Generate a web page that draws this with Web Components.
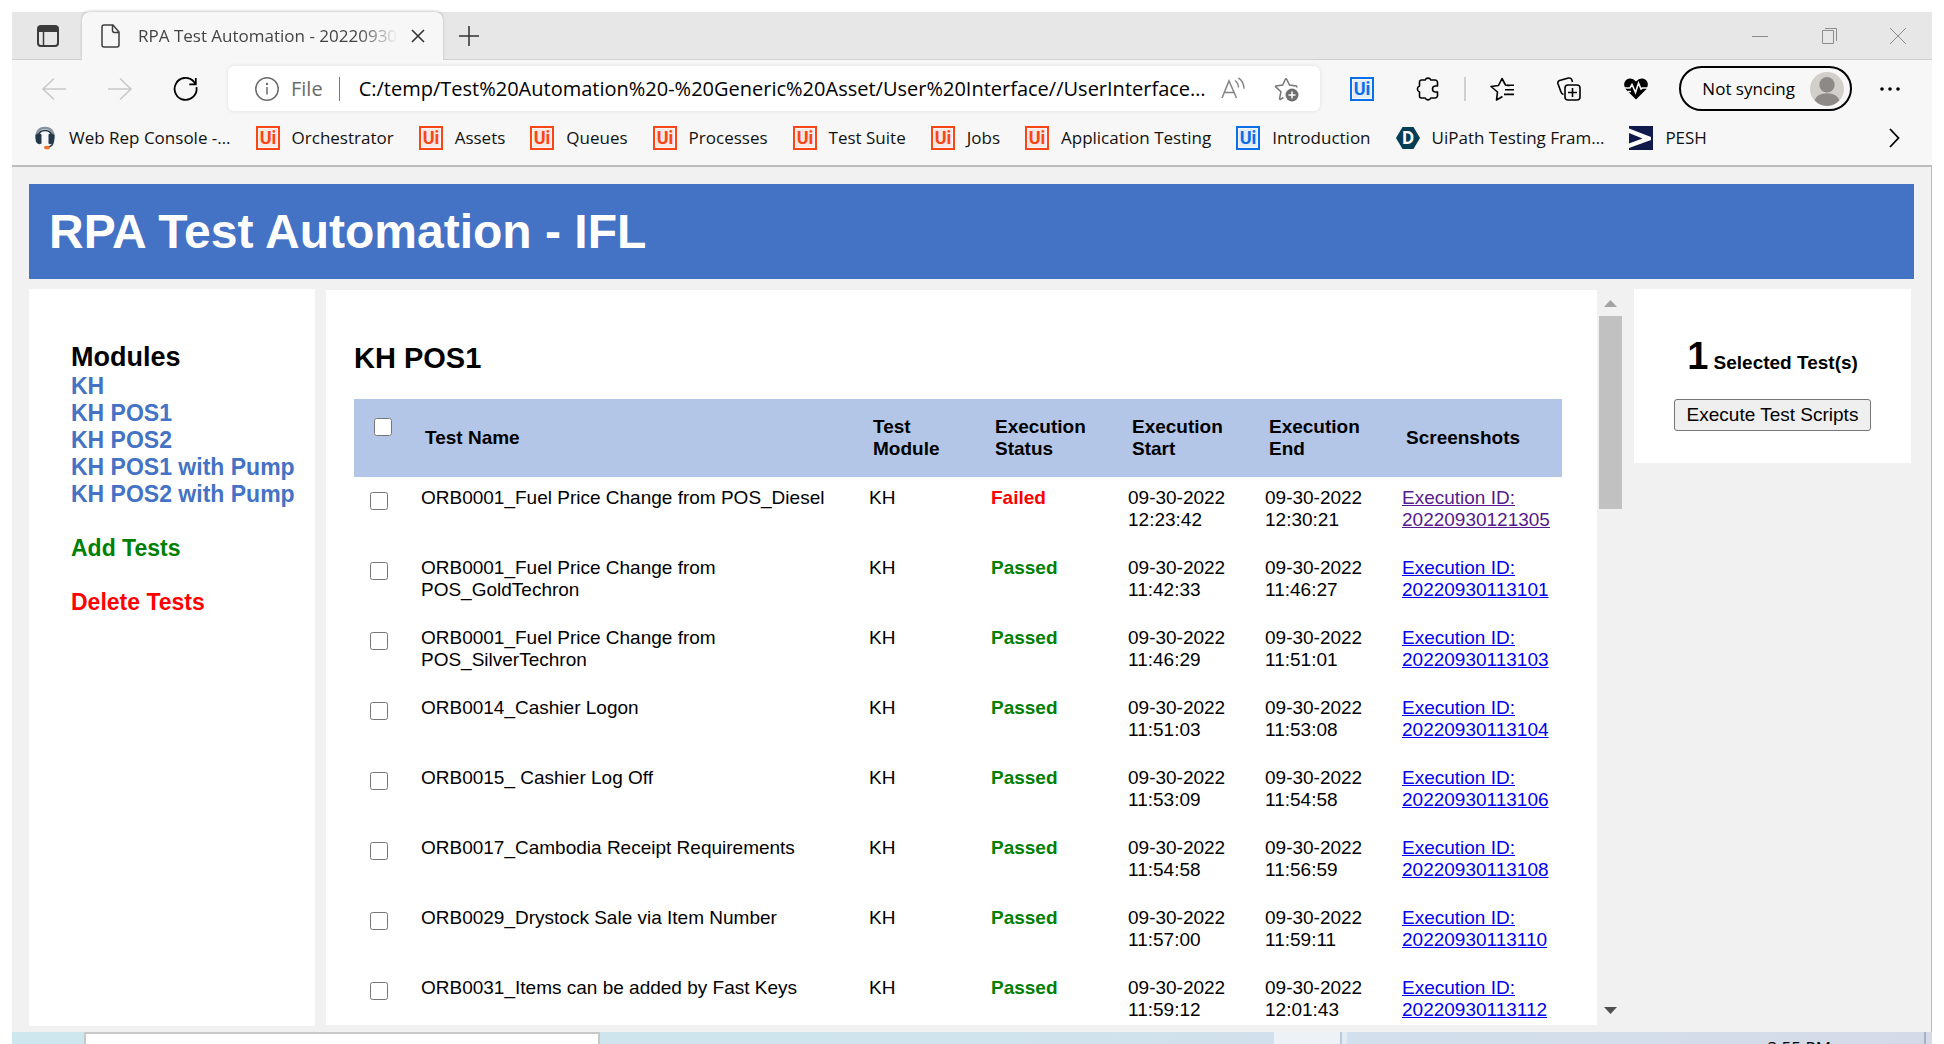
<!DOCTYPE html>
<html lang="en">
<head>
<meta charset="utf-8">
<title>RPA Test Automation</title>
<style>
html, body { margin: 0; height: 100%; background: #fff; overflow: hidden; }
body { font-family: "Liberation Sans", Arial, sans-serif; color: #000; }
</style>
</head>
<body>
<desktop-view></desktop-view>
<script>
const define = (name, html, setup) => {
  const tpl = document.createElement('template');
  tpl.innerHTML = html;
  customElements.define(name, class extends HTMLElement {
    constructor() {
      super();
      this.attachShadow({ mode: 'open' }).append(tpl.content.cloneNode(true));
    }
    connectedCallback() { if (setup) setup(this, this.shadowRoot); }
  });
};

/* ---------- icons ---------- */
const ui = c => `<rect width="24" height="24" fill="${c}"/><rect x="2" y="2" width="20" height="20" fill="#f7f7f7"/><rect x="3" y="3" width="18" height="18" fill="${c}" opacity=".08"/><text x="12" y="18" text-anchor="middle" font-family="Roboto, sans-serif" font-weight="700" font-size="18" fill="${c}">Ui</text>`;
const ICONS = {
  tabs: '<g fill="none" stroke="#3b3b3b" stroke-width="2"><rect x="2" y="2" width="20" height="20" rx="3"/><path d="M7.500 7v15" stroke-width="1.500"/></g><path d="M2 2h20v6H2z" fill="#3b3b3b"/>',
  page: '<path d="M5 1h9l6 7v13a2 2 0 0 1-2 2H5a2 2 0 0 1-2-2V3a2 2 0 0 1 2-2zM13.500 1v5.500a2 2 0 0 0 2 2H20" fill="none" stroke="#3f3f3f" stroke-width="1.500"/>',
  close: '<path d="M6 6l12 12M18 6L6 18" fill="none" stroke="#333" stroke-width="1.600"/>',
  plus: '<path d="M12 2v20M2 12h20" fill="none" stroke="#333" stroke-width="1.500"/>',
  back: '<path d="M24 12H1M12 1.500L1 12l11 10.500" fill="none" stroke="#c9c9c9" stroke-width="1.600"/>',
  forward: '<path d="M0 12h23M12 1.500L23 12 12 22.500" fill="none" stroke="#c9c9c9" stroke-width="1.600"/>',
  refresh: '<path d="M22.500 10.200A11 11 0 1 1 19.500 4.200M21.800 1v6.300h-6.500M19 3.800l2.800 3.300" fill="none" stroke="#000" stroke-width="1.800"/>',
  info: '<g fill="none" stroke="#6b6b6b" stroke-width="1.500"><circle cx="12" cy="12" r="11.200"/><path d="M12 10v7.500"/></g><circle cx="12" cy="7" r="1.200" fill="#6b6b6b"/>',
  read: '<g fill="none" stroke="#848484" stroke-width="1.500"><path d="M1 21L8 4l7.500 17M3.500 15.500h9.500M14 3.500q3.500 2.500 3.500 7M17.500 .8q5.500 4 5.500 11"/></g>',
  star: '<path d="M9.500 20.500l-3 1.800a.6.6 0 0 1-.9-.7l1.300-6.900-5.200-4.800a.6.6 0 0 1 .3-1l6.700-.8L11.500 2a.6.6 0 0 1 1.100 0l2.900 6.100 6.700.9q1 .5.300 1.500" fill="none" stroke="#777" stroke-width="1.500"/><circle cx="18" cy="18" r="6.500" fill="#6f6f6f"/><path d="M18 14.500v7M14.500 18h7" stroke="#fff" stroke-width="1.500"/>',
  puzzle: '<path d="M5.500 3h3.700a3 3 0 0 1 5.600 0H19a2.500 2.500 0 0 1 2.500 2.500V9h-2a3 3 0 0 0 0 6h2v3.500A2.500 2.500 0 0 1 19 21h-4.200a3 3 0 0 1-5.600 0H5.500a2 2 0 0 1-2-2v-4a3.200 3.200 0 0 1 0-6V5a2 2 0 0 1 2-2z" fill="none" stroke="#000" stroke-width="1.600" stroke-linejoin="round"/>',
  favorites: '<path d="M12.500 19.500l-6 3.500 1-8L1 9.500l7.500-1L12 1.500l3.500 6.500 4 .8M15 12.800h9M17 8.200h7M14 17.400h10" fill="none" stroke="#000" stroke-width="1.600" stroke-linejoin="round"/>',
  collections: '<g fill="none" stroke="#000" stroke-width="1.600"><path d="M6.500 17.500Q4.500 17 3.600 14L.9 6.500Q.5 4.200 2.500 3.400L11.500 1q2.500-.3 3.200 1.500L15.500 5"/><rect x="8" y="8" width="15" height="15" rx="3"/><path d="M15.500 11v9M11 15.500h9"/></g>',
  heart: '<path d="M12 22.500L1.500 12Q-1.500 6.500 2 3 7.500-.5 12 4.500 16.500-.5 22 3q3.500 3.500.5 9z" fill="#000"/><path d="M0 11h6l2-3.500 3.500 8L14.500 6l2.500 6 1.500-1H24M4 14.500h3" fill="none" stroke="#f7f7f7" stroke-width="1.600"/>',
  dots: '<g fill="#000"><circle cx="4" cy="12" r="1.800"/><circle cx="12" cy="12" r="1.800"/><circle cx="20" cy="12" r="1.800"/></g>',
  minimize: '<path d="M4 12.500h16" stroke="#8c8c8c" fill="none"/>',
  restore: '<path d="M5.500 6.500h11v13h-11zM8 4.500h11.500V17" stroke="#8c8c8c" fill="none"/>',
  exit: '<path d="M4 4l16 16M20 4L4 20" stroke="#8c8c8c" fill="none"/>',
  chevron: '<path d="M8 3l8.500 9L8 21" fill="none" stroke="#000" stroke-width="1.800"/>',
  avatar: '<circle cx="12" cy="12" r="12" fill="#d2cfcb"/><circle cx="12" cy="9" r="5.400" fill="#8d8986"/><path d="M3.200 20Q5 15 12 15t8.800 5Q17 24 12 24T3.200 20z" fill="#8d8986"/>',
  headset: '<path d="M3.500 13Q3 2 12 2t8.500 11" fill="none" stroke="#8794a0" stroke-width="2.600"/><path d="M5.500 10Q6 4.500 12 4.500T18.500 10" fill="none" stroke="#24384b" stroke-width="1.500"/><path d="M2.500 9Q6 6.500 8.500 8.500v9Q5 19.500 2.800 15.500zM21.500 9Q18 6.500 15.500 8.500v9q3.500 2 5.700-2z" fill="#24384b"/><path d="M20 16q0 4-5 5" fill="none" stroke="#24384b" stroke-width="1.500"/><ellipse cx="14" cy="21.500" rx="3" ry="1.800" fill="#f36f2c"/>',
  orange: ui('#fa4616'),
  blue: ui('#0b6fea'),
  hexagon: '<path d="M6.500 1h11L24 12l-6.500 11h-11L0 12z" fill="#053e54"/><text x="12" y="18" text-anchor="middle" font-family="Open Sans, sans-serif" font-weight="700" font-size="17" fill="#fff">D</text>',
  pesh: '<path d="M0 0h24v24H0z" fill="#101b4b"/><path d="M0 2.500L22 11v3L0 22v-4.500L13.500 12.500 0 7z" fill="#fff"/>'
};
define('ui-icon', `<style>
  :host { display: block; flex: none; width: var(--size, 24px); height: var(--size, 24px); }
  svg { display: block; width: 100%; height: 100%; overflow: visible; }
</style><svg viewBox="0 0 24 24" aria-hidden="true"></svg>`, (el, root) => {
  root.querySelector('svg').innerHTML = ICONS[el.getAttribute('name')];
});

define('icon-button', `<style>
  :host { display: block; flex: none; }
  button { display: block; padding: 0; border: 0; background: none; }
</style><button type="button"></button>`, (el, root) => {
  const button = root.querySelector('button');
  button.setAttribute('aria-label', el.getAttribute('label'));
  button.innerHTML = `<ui-icon name="${el.getAttribute('icon')}"></ui-icon>`;
});

/* ---------- browser chrome ---------- */
define('tab-strip', `<style>
  :host { display: flex; height: 47px; background: #e7e7e7; border-bottom: 1px solid #d0d0d0; align-items: center; }
  .actions { padding: 0 22px 0 24px; }
  .tab { display: flex; align-items: center; box-sizing: border-box; align-self: stretch; width: 361px; margin-bottom: -1px; padding: 0 13px 0 17px; background: #f7f7f7; border-radius: 8px 8px 0 0; box-shadow: 0 -1px 3px #0003; clip-path: inset(-4px -4px 0 -4px); }
  .title { flex: 1; min-width: 0; margin: 0 8px 0 15px; overflow: hidden; white-space: nowrap; font: 17px/24px "Open Sans", "Noto Sans", sans-serif; color: #444; -webkit-mask: linear-gradient(90deg, #000 85%, transparent); mask: linear-gradient(90deg, #000 85%, transparent); }
  .new { margin-left: 14px; flex: 1; }
  .controls { display: flex; gap: 45px; padding-right: 22px; }
</style>
<icon-button class="actions" icon="tabs" label="Tab actions"></icon-button>
<div class="tab"><ui-icon name="page"></ui-icon><span class="title">RPA Test Automation - 20220930</span><icon-button icon="close" label="Close tab"></icon-button></div>
<icon-button class="new" icon="plus" label="New tab"></icon-button>
<div class="controls"><icon-button icon="minimize" label="Minimize"></icon-button><icon-button icon="restore" label="Restore"></icon-button><icon-button icon="exit" label="Close"></icon-button></div>`);

define('address-bar', `<style>
  :host { display: flex; flex: 1; min-width: 0; height: 45px; align-items: center; box-sizing: border-box; padding: 0 22px 0 27px; background: #fff; border-radius: 6px; box-shadow: 0 0 4px #0000001a; font: 20px/26px "Open Sans", "Noto Sans", sans-serif; }
  label { margin-left: 12px; color: #6b6b6b; padding-right: 16px; }
  i { width: 1px; height: 24px; background: #777; margin-right: 19px; }
  input { flex: 1; min-width: 0; padding: 0; border: 0; outline: 0; background: none; font: inherit; color: #000; }
  .read { margin: 0 29px 0 8px; }
</style>
<ui-icon name="info"></ui-icon><label for="url">File</label><i></i>
<input id="url" value="C:/temp/Test%20Automation%20-%20Generic%20Asset/User%20Interface//UserInterface…">
<icon-button class="read" icon="read" label="Read aloud"></icon-button><icon-button icon="star" label="Add to favorites"></icon-button>`);

define('nav-bar', `<style>
  :host { display: flex; align-items: center; padding: 6px 30px 0 30px; }
  .group { display: flex; align-items: center; gap: 42px; }
  .left { margin-right: 30px; }
  .right { margin-left: 30px; }
  .tools { gap: 43px; }
  .rule { width: 2px; height: 24px; margin: 0 24px; background: #d0d0d0; }
  .profile { display: flex; align-items: center; box-sizing: border-box; height: 45px; margin: 0 26px 0 31px; padding: 0 6px 0 21px; border: 2px solid #000; border-radius: 23px; background: none; font: 17px/24px "Open Sans", "Noto Sans", sans-serif; gap: 15px; --size: 34px; color: #000; }
</style>
<div class="group left"><icon-button icon="back" label="Back"></icon-button><icon-button icon="forward" label="Forward"></icon-button><icon-button icon="refresh" label="Refresh"></icon-button></div>
<address-bar></address-bar>
<div class="group right"><icon-button icon="blue" label="UiPath"></icon-button><icon-button icon="puzzle" label="Extensions"></icon-button></div>
<div class="rule"></div>
<div class="group tools"><icon-button icon="favorites" label="Favorites"></icon-button><icon-button icon="collections" label="Collections"></icon-button><icon-button icon="heart" label="Performance"></icon-button></div>
<button class="profile" type="button">Not syncing<ui-icon name="avatar"></ui-icon></button>
<icon-button icon="dots" label="Settings"></icon-button>`);

define('bookmark-link', `<style>
  :host { display: block; flex: none; }
  a { display: flex; align-items: center; gap: 12px; color: #111; text-decoration: none; font: 17px/24px "Open Sans", "Noto Sans", sans-serif; white-space: nowrap; }
</style><a href="#"><slot name="icon"></slot><slot></slot></a>`);

define('bookmark-bar', `<style>
  :host { display: flex; align-items: center; height: 54px; padding: 0 26px 0 21px; border-bottom: 2px solid #bcbcbc; }
  nav { display: flex; flex: 1; gap: 25px; min-width: 0; }
</style><nav></nav><icon-button icon="chevron" label="More favorites"></icon-button>`, (el, root) => {
  root.querySelector('nav').innerHTML = [
    ['headset', 'Web Rep Console -…'], ['orange', 'Orchestrator'], ['orange', 'Assets'], ['orange', 'Queues'],
    ['orange', 'Processes'], ['orange', 'Test Suite'], ['orange', 'Jobs'], ['orange', 'Application Testing'],
    ['blue', 'Introduction'], ['hexagon', 'UiPath Testing Fram…'], ['pesh', 'PESH']
  ].map(([i, t]) => `<bookmark-link><ui-icon slot="icon" name="${i}"></ui-icon>${t}</bookmark-link>`).join('');
});

/* ---------- page ---------- */
define('module-list', `<style>
  :host { display: block; flex: none; box-sizing: border-box; width: 286px; padding: 53px 0 0 42px; background: #fff; font-weight: 700; }
  h2 { margin: 0; font-size: 27px; line-height: 31px; }
  ul { margin: 0; padding: 0; list-style: none; }
  a { display: block; font-size: 23px; line-height: 27px; color: #4472c4; text-decoration: none; }
  a.add { margin: 27px 0; color: #008000; }
  a.del { color: #f00; }
</style>
<h2>Modules</h2>
<ul><li><a href="#">KH</a></li><li><a href="#">KH POS1</a></li><li><a href="#">KH POS2</a></li><li><a href="#">KH POS1 with Pump</a></li><li><a href="#">KH POS2 with Pump</a></li></ul>
<a class="add" href="#">Add Tests</a><a class="del" href="#">Delete Tests</a>`);

const TESTS = [
  ['ORB0001_Fuel Price Change from POS_Diesel', 'Failed', '12:23:42', '12:30:21', '20220930121305'],
  ['ORB0001_Fuel Price Change from POS_GoldTechron', 'Passed', '11:42:33', '11:46:27', '20220930113101'],
  ['ORB0001_Fuel Price Change from POS_SilverTechron', 'Passed', '11:46:29', '11:51:01', '20220930113103'],
  ['ORB0014_Cashier Logon', 'Passed', '11:51:03', '11:53:08', '20220930113104'],
  ['ORB0015_ Cashier Log Off', 'Passed', '11:53:09', '11:54:58', '20220930113106'],
  ['ORB0017_Cambodia Receipt Requirements', 'Passed', '11:54:58', '11:56:59', '20220930113108'],
  ['ORB0029_Drystock Sale via Item Number', 'Passed', '11:57:00', '11:59:11', '20220930113110'],
  ['ORB0031_Items can be added by Fast Keys', 'Passed', '11:59:12', '12:01:43', '20220930113112']
];
define('test-table', `<style>
  :host { display: block; }
  table { width: 100%; table-layout: fixed; border-collapse: collapse; font-size: 19px; line-height: 22px; }
  th { height: 78px; padding: 0 0 0 20px; box-sizing: border-box; background: #b4c6e7; text-align: left; }
  td { height: 70px; padding: 10px 0 0 16px; box-sizing: border-box; vertical-align: top; }
  th:first-child { vertical-align: top; padding-top: 19px; }
  td:first-child { padding-top: 15px; }
  input { display: block; width: 18px; height: 18px; margin: 0; }
  .pick { width: 51px; } .mod { width: 122px; } .mid { width: 137px; } .shot { width: 176px; }
  .Failed { color: #f00; } .Passed { color: #008000; }
  a { color: #00e; } a.seen { color: #551a8b; }
</style>
<table><thead><tr>
<th class="pick"><input type="checkbox" aria-label="Select all tests"></th><th>Test Name</th><th class="mod">Test<br>Module</th><th class="mid">Execution<br>Status</th><th class="mid">Execution<br>Start</th><th class="mid">Execution<br>End</th><th class="shot">Screenshots</th>
</tr></thead><tbody></tbody></table>`, (el, root) => {
  root.querySelector('tbody').innerHTML = TESTS.map(([name, status, start, end, id], n) =>
    `<tr><td><input type="checkbox" aria-label="Select ${name}"></td><td>${name}</td><td>KH</td><td><b class="${status}">${status}</b></td><td>09-30-2022<br>${start}</td><td>09-30-2022<br>${end}</td><td><a href="#"${n ? '' : ' class="seen"'}>Execution ID:<br>${id}</a></td></tr>`).join('');
});

define('scroll-track', `<style>
  :host { display: flex; flex: none; flex-direction: column; justify-content: space-between; align-items: center; box-sizing: border-box; width: 23px; padding: 11px 0 12px; margin-left: 2px; }
  .up, .down { width: 13px; height: 7px; background: #a3a3a3; clip-path: polygon(50% 0, 100% 100%, 0 100%); }
  .down { background: #505050; clip-path: polygon(0 0, 100% 0, 50% 100%); }
  .rail { flex: 1; align-self: stretch; margin: 9px 0 0; }
  .thumb { height: 28%; background: #c1c1c1; }
</style><div class="up"></div><div class="rail"><div class="thumb"></div></div><div class="down"></div>`);

define('run-card', `<style>
  :host { display: block; flex: none; align-self: flex-start; box-sizing: border-box; width: 277px; height: 174px; margin-right: 3px; padding-top: 46px; background: #fff; text-align: center; }
  p { margin: 0; font-weight: 700; font-size: 19px; line-height: 42px; }
  strong { font-size: 38px; }
  button { margin-top: 15px; height: 32px; padding: 0 12px; border: 1px solid #767676; border-radius: 3px; background: #efefef; color: #000; font: 19px/28px "Liberation Sans", Arial, sans-serif; }
</style><p><strong>1</strong> Selected Test(s)</p><button type="button">Execute Test Scripts</button>`);

define('test-page', `<style>
  :host { display: flex; flex: 1; min-height: 0; flex-direction: column; background: #f1f1f1; border-right: 1px solid #bbb; padding: 17px 17px 6px 17px; }
  h1 { margin: 0 0 10px; padding: 0 20px; background: #4472c4; color: #fff; font-size: 48px; line-height: 95px; }
  .cols { display: flex; flex: 1; min-height: 0; }
  main { flex: 1; min-width: 0; overflow: hidden; box-sizing: border-box; margin: 1px 0 1px 11px; padding: 52px 35px 0 28px; background: #fff; }
  h2 { margin: 0 0 25px; font-size: 29px; line-height: 32px; }
  run-card { margin-left: 12px; }
</style>
<h1>RPA Test Automation - IFL</h1>
<div class="cols"><module-list></module-list><main><h2>KH POS1</h2><test-table></test-table></main><scroll-track></scroll-track><run-card></run-card></div>`);

define('task-bar', `<style>
  :host { display: flex; flex: none; height: 12px; overflow: hidden; box-sizing: border-box; padding-left: 72px; background: linear-gradient(90deg, #cee7ee, #cfe4ec 50%, #d2dfec 70%, #d5dae8); }
  .search { width: 512px; border: 2px solid #c8c8c8; background: #fff; height: 20px; }
  .fill { flex: 1; }
  .show { width: 66px; background: #edf2f7; border-right: 2px solid #b9c9d9; }
  .edge { width: 5px; background: #e2eaf3; }
  .tray { box-sizing: border-box; width: 577px; padding: 4px 93px 0 0; text-align: right; font: 17px/24px "Open Sans", "Noto Sans", sans-serif; }
  .peek { width: 6px; border-left: 2px solid #a9b0c0; }
</style><div class="search"></div><div class="fill"></div><div class="show"></div><div class="edge"></div><div class="tray">3:55 PM</div><div class="peek"></div>`);

define('desktop-view', `<style>
  :host { display: flex; flex-direction: column; box-sizing: border-box; height: 100vh; padding: 12px 12px 0; }
  .chrome { flex: none; background: #f7f7f7; }
</style>
<div class="chrome"><tab-strip></tab-strip><nav-bar></nav-bar><bookmark-bar></bookmark-bar></div>
<test-page></test-page><task-bar></task-bar>`);
</script>
</body>
</html>
